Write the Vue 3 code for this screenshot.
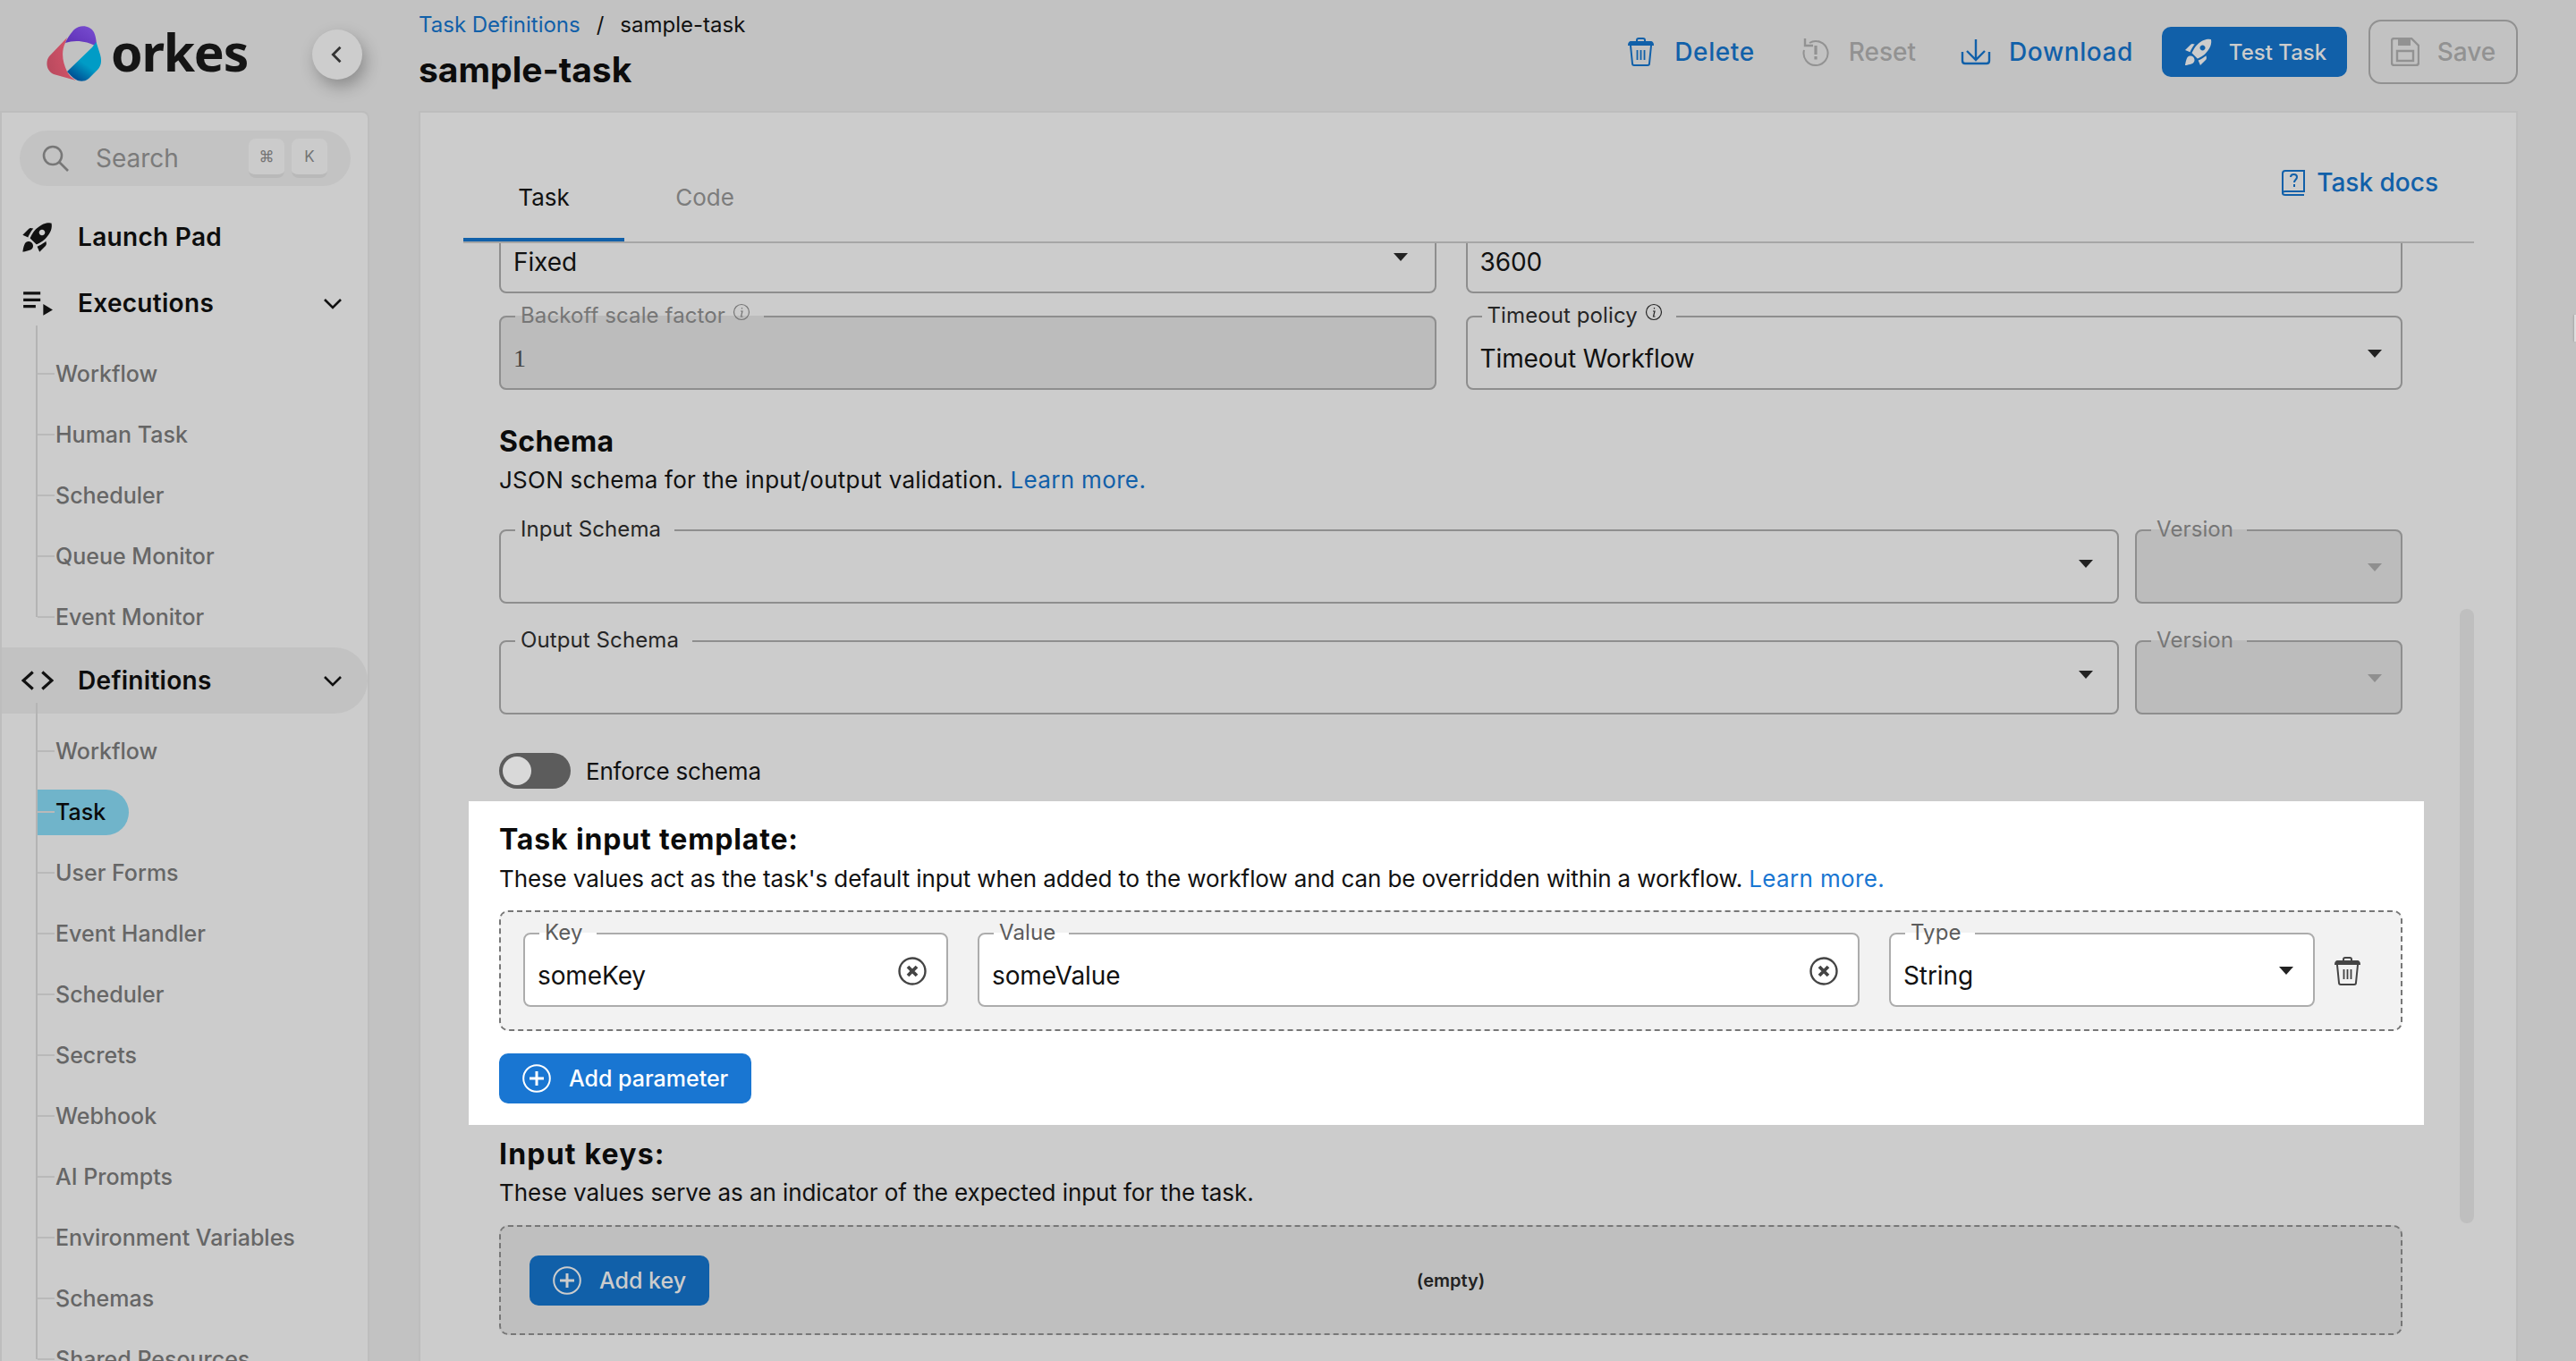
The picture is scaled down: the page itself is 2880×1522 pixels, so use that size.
<template>
  <div class="app">
    <aside class="side">
      <div class="brand">
        <svg class="logo" viewBox="0 0 62 62">
          <defs>
            <linearGradient id="lgBlue" x1="0.7" y1="0.2" x2="0.25" y2="0.95">
              <stop offset="0.45" stop-color="#009cc6" />
              <stop offset="1" stop-color="#004f94" />
            </linearGradient>
            <linearGradient id="lgPurple" x1="0" y1="1" x2="1" y2="0">
              <stop offset="0" stop-color="#5b2cb3" />
              <stop offset="1" stop-color="#7a4fd2" />
            </linearGradient>
            <linearGradient id="lgRed" x1="0" y1="0.7" x2="1" y2="0.3">
              <stop offset="0" stop-color="#b94a5e" />
              <stop offset="1" stop-color="#d9556b" />
            </linearGradient>
          </defs>
          <path fill="url(#lgRed)" d="M23 13L3 34C-1 39-1 50 8 54L33 61C28 58 25 55 23 51C18 41 16 29 21 19Z" />
          <path fill="url(#lgPurple)" d="M21 19C23 14 28 7 31 4C37-2 49-1 53 7C55 11 56 18 56 23C46 17 32 15 21 19Z" />
          <path fill="url(#lgBlue)" d="M55.500 18L60 32C62 39 61 44 58 48L47 59C42 63 36 62 33 60C29 58 26 54 23 51L51 24Z" />
        </svg>
        <span class="logo-text">orkes</span>
        <button class="collapse">
          <svg viewBox="0 0 24 24" width="28" height="28"><path d="M15 5l-7 7 7 7" fill="none" stroke="#333" stroke-width="2.4" /></svg>
        </button>
      </div>

      <nav class="panel">
        <div class="search">
          <svg class="search-ic" viewBox="0 0 30 30"><circle cx="12" cy="12" r="10" fill="none" stroke="#777" stroke-width="2.6" /><path d="M19 19l10 10" stroke="#777" stroke-width="2.6" /></svg>
          <span class="search-txt">Search</span>
          <span class="kbd">⌘</span>
          <span class="kbd">K</span>
        </div>

        <div class="row">
          <svg class="row-ic rocket" viewBox="0 0 24 24"><path d="M9.19 6.35c-2.04 2.29-3.44 5.58-3.57 5.89L2 10.69l4.05-4.05c.47-.47 1.15-.68 1.81-.55l1.33.26zM11.17 17s3.74-1.55 5.89-3.7c5.4-5.4 4.5-9.62 4.21-10.57-.95-.3-5.17-1.19-10.57 4.21C8.55 9.09 7 12.83 7 12.83L11.17 17zm6.48-2.19c-2.29 2.04-5.58 3.44-5.89 3.57L13.31 22l4.05-4.05c.47-.47.68-1.15.55-1.81l-.26-1.33zM9 18c0 .83-.34 1.58-.88 2.12C6.94 21.3 2 22 2 22s.7-4.94 1.88-6.12C4.42 15.34 5.17 15 6 15c1.66 0 3 1.34 3 3zm4-9c0-1.1.9-2 2-2s2 .9 2 2-.9 2-2 2-2-.9-2-2z" /></svg>
          <span>Launch Pad</span>
        </div>

        <div class="row">
          <svg class="row-ic" viewBox="0 0 34 28"><path d="M2 2h18v3H2zM2 9h18v3H2zM2 16h13v3H2zM23 15l10 6-10 6z" /></svg>
          <span>Executions</span>
          <svg class="chev" viewBox="0 0 20 12"><path d="M1 1l9 9 9-9" fill="none" stroke="#111" stroke-width="2.6" /></svg>
        </div>
        <ul class="sub">
          <li v-for="item in executions" :key="item"><span class="sub-txt">{{ item }}</span></li>
        </ul>

        <div class="row row-on">
          <svg class="row-ic" viewBox="0 0 34 24"><path d="M12 3L2 12l10 9M22 3l10 9-10 9" fill="none" stroke="#111" stroke-width="3" /></svg>
          <span>Definitions</span>
          <svg class="chev" viewBox="0 0 20 12"><path d="M1 1l9 9 9-9" fill="none" stroke="#111" stroke-width="2.6" /></svg>
        </div>
        <ul class="sub">
          <li v-for="item in definitions" :key="item"><span class="sub-txt" :class="{ active: item === 'Task' }">{{ item }}</span></li>
        </ul>
      </nav>
    </aside>

    <main class="main">
      <header class="head">
        <div>
          <div class="crumbs"><a>Task Definitions</a><i>/</i><span>sample-task</span></div>
          <h1>sample-task</h1>
        </div>
        <div class="actions">
          <button class="act act-blue">
            <svg viewBox="0 0 31 32" width="31" height="32"><path d="M11 4V3c0-1 1-2 2-2h5c1 0 2 1 2 2v1" fill="none" stroke="#1160a9" stroke-width="2" /><path d="M5 4h21c3 0 4 2 4 5H1c0-3 1-5 4-5z" fill="#1160a9" /><path d="M4 9l2 20c0 1 1 2 2 2h15c1 0 2-1 2-2l2-20" fill="none" stroke="#1160a9" stroke-width="2" /><path d="M11.500 14v11M15.500 14v11M19.500 14v11" fill="none" stroke="#1160a9" stroke-width="1.800" /></svg>
            Delete
          </button>
          <button class="act act-off act-reset">
            <svg viewBox="0 0 30 32" width="30" height="32"><path d="M8 6A13.500 13.500 0 1 1 2 14" fill="none" stroke="#929292" stroke-width="2" /><path d="M3 1v8h9" fill="none" stroke="#929292" stroke-width="2.400" /><path d="M15 9v10M15 21v3.500" stroke="#929292" stroke-width="3.200" /></svg>
            Reset
          </button>
          <button class="act act-blue act-down">
            <svg viewBox="0 0 34 32" width="34" height="32"><path d="M17 2v23M7 15l10 10 10-10" fill="none" stroke="#1160a9" stroke-width="2.400" /><path d="M2 16v10c0 2 1 3 3 3h24c2 0 3-1 3-3V16" fill="none" stroke="#1160a9" stroke-width="2.400" /></svg>
            Download
          </button>
          <button class="btn-test">
            <svg viewBox="0 0 24 24" width="36" height="36"><path fill="#ccc" d="M9.19 6.35c-2.04 2.29-3.44 5.58-3.57 5.89L2 10.69l4.05-4.05c.47-.47 1.15-.68 1.81-.55l1.33.26zM11.17 17s3.74-1.55 5.89-3.7c5.4-5.4 4.5-9.62 4.21-10.57-.95-.3-5.17-1.19-10.57 4.21C8.55 9.09 7 12.83 7 12.83L11.17 17zm6.48-2.19c-2.29 2.04-5.58 3.44-5.89 3.57L13.31 22l4.05-4.05c.47-.47.68-1.15.55-1.81l-.26-1.33zM9 18c0 .83-.34 1.58-.88 2.12C6.94 21.3 2 22 2 22s.7-4.94 1.88-6.12C4.42 15.34 5.17 15 6 15c1.66 0 3 1.34 3 3zm4-9c0-1.1.9-2 2-2s2 .9 2 2-.9 2-2 2-2-.9-2-2z" /></svg>
            Test Task
          </button>
          <button class="btn-save">
            <svg viewBox="0 0 32 32" width="32" height="32"><path d="M4 1h19l8 8v19c0 2-1 3-3 3H4c-2 0-3-1-3-3V4c0-2 1-3 3-3z" fill="none" stroke="#929292" stroke-width="2.400" /><path d="M8 1h14v8H8z" fill="#929292" /><path d="M7 15h18v11H7z" fill="none" stroke="#929292" stroke-width="2.400" /></svg>
            Save
          </button>
        </div>
      </header>

      <section class="card">
        <div class="tabs">
          <div class="tab tab-on">Task</div>
          <div class="tab">Code</div>
          <a class="docs">
            <svg viewBox="0 0 26 29" width="26" height="29"><path d="M4 1h21v23H4C2 24 1 25 1 26V4c0-2 1-3 3-3zM1 26c0 1 1 2 3 2h21" fill="none" stroke="#1160a9" stroke-width="2" /><path d="M10 8c0-4 7-4 7 0 0 3-3 3-3 6M14 16v3" fill="none" stroke="#1160a9" stroke-width="2" /></svg>
            Task docs
          </a>
        </div>

        <div class="scroll">
          <div class="two first">
            <fieldset class="field"><legend></legend><span class="val">Fixed</span><i class="caret c-fixed"></i></fieldset>
            <fieldset class="field"><legend></legend><span class="val">3600</span></fieldset>
          </div>
          <div class="two gap-row">
            <fieldset class="field off">
              <legend>Backoff scale factor<svg class="info" viewBox="0 0 20 20"><circle cx="10" cy="10" r="8.500" fill="none" stroke="currentColor" stroke-width="1.200" /><path d="M10.500 5v1.500M9 9h2l-1.500 6h2" fill="none" stroke="currentColor" stroke-width="1.200" /></svg></legend>
              <span class="val val-num">1</span>
            </fieldset>
            <fieldset class="field">
              <legend>Timeout policy<svg class="info" viewBox="0 0 20 20"><circle cx="10" cy="10" r="8.500" fill="none" stroke="currentColor" stroke-width="1.200" /><path d="M10.500 5v1.500M9 9h2l-1.500 6h2" fill="none" stroke="currentColor" stroke-width="1.200" /></svg></legend>
              <span class="val">Timeout Workflow</span><i class="caret c-side"></i>
            </fieldset>
          </div>

          <h2 class="h-schema">Schema</h2>
          <p class="desc d-schema">JSON schema for the input/output validation. <a>Learn more.</a></p>

          <div class="pick pick-1">
            <fieldset class="field"><legend>Input Schema</legend><span class="val"></span><i class="caret c-empty"></i></fieldset>
            <fieldset class="field off"><legend>Version</legend><span class="val"></span><i class="caret c-off"></i></fieldset>
          </div>
          <div class="pick pick-2">
            <fieldset class="field"><legend>Output Schema</legend><span class="val"></span><i class="caret c-empty"></i></fieldset>
            <fieldset class="field off"><legend>Version</legend><span class="val"></span><i class="caret c-off"></i></fieldset>
          </div>

          <div class="toggle-row">
            <span class="toggle"><span class="thumb"></span></span>
            Enforce schema
          </div>

          <div class="hilite">
            <h2 class="h-task">Task input template:</h2>
            <p class="desc d-task">These values act as the task's default input when added to the workflow and can be overridden within a workflow. <a class="bright">Learn more.</a></p>
            <div class="dash dash-params">
              <fieldset class="field lite"><legend>Key</legend><span class="val">someKey</span>
                <svg class="clear" viewBox="0 0 32 32"><circle cx="16" cy="16" r="14.500" fill="none" stroke="#444" stroke-width="2.400" /><path d="M11 11l10 10M21 11L11 21" stroke="#444" stroke-width="3.800" /></svg>
              </fieldset>
              <fieldset class="field lite"><legend>Value</legend><span class="val">someValue</span>
                <svg class="clear" viewBox="0 0 32 32"><circle cx="16" cy="16" r="14.500" fill="none" stroke="#444" stroke-width="2.400" /><path d="M11 11l10 10M21 11L11 21" stroke="#444" stroke-width="3.800" /></svg>
              </fieldset>
              <fieldset class="field lite"><legend>Type</legend><span class="val">String</span><i class="caret c-type"></i></fieldset>
              <svg class="trash" viewBox="0 0 31 32"><path d="M11 4V3c0-1 1-2 2-2h5c1 0 2 1 2 2v1" fill="none" stroke="#444" stroke-width="2" /><path d="M5 4h21c3 0 4 2 4 5H1c0-3 1-5 4-5z" fill="#444" /><path d="M4 9l2 20c0 1 1 2 2 2h15c1 0 2-1 2-2l2-20" fill="none" stroke="#444" stroke-width="2" /><path d="M11.500 14v11M15.500 14v11M19.500 14v11" fill="none" stroke="#444" stroke-width="1.800" /></svg>
            </div>
            <button class="add add-bright">
              <svg viewBox="0 0 32 32" width="32" height="32"><circle cx="16" cy="16" r="14.800" fill="none" stroke="#fff" stroke-width="2" /><path d="M16 8v16M8 16h16" stroke="#fff" stroke-width="3" /></svg>
              Add parameter
            </button>
          </div>

          <h2 class="h-keys">Input keys:</h2>
          <p class="desc d-keys">These values serve as an indicator of the expected input for the task.</p>
          <div class="dash dash-keys">
            <button class="add">
              <svg viewBox="0 0 32 32" width="32" height="32"><circle cx="16" cy="16" r="14.800" fill="none" stroke="#ccc" stroke-width="2" /><path d="M16 8v16M8 16h16" stroke="#ccc" stroke-width="3" /></svg>
              Add key
            </button>
            <span class="empty">(empty)</span>
          </div>

          <div class="scrollbar"></div>
        </div>
      </section>
    </main>
    <span class="edge-tab"></span>
  </div>
</template>

<script setup>
const executions = ['Workflow', 'Human Task', 'Scheduler', 'Queue Monitor', 'Event Monitor']
const definitions = [
  'Workflow',
  'Task',
  'User Forms',
  'Event Handler',
  'Scheduler',
  'Secrets',
  'Webhook',
  'AI Prompts',
  'Environment Variables',
  'Schemas',
  'Shared Resources'
]
</script>

<style>
html,
body {
  margin: 0;
  height: 100%;
  overflow: hidden;
  background: #c2c2c2;
}
</style>

<style scoped>
* {
  box-sizing: border-box;
}

.app {
  display: flex;
  height: 1522px;
  overflow: hidden;
  font-family: Inter, "Noto Sans", sans-serif;
  color: #111;
  background: #c2c2c2;
}

button {
  font-family: inherit;
  border: none;
  background: none;
  padding: 0;
}

/* sidebar */
.side {
  width: 413px;
  flex: none;
  display: flex;
  flex-direction: column;
}

.brand {
  height: 124px;
  flex: none;
  display: flex;
  align-items: center;
  padding-left: 52px;
}

.logo {
  width: 62px;
  height: 62px;
  margin-bottom: 4px;
  flex: none;
}

.logo-text {
  font-family: "Noto Sans", sans-serif;
  font-size: 57px;
  font-weight: 700;
  letter-spacing: -1.2px;
  color: #151515;
  margin: 0 0 8px 10px;
  line-height: 62px;
}

.collapse {
  position: absolute;
  left: 349px;
  top: 33px;
  width: 56px;
  height: 56px;
  border-radius: 50%;
  background: #cdcdcd;
  box-shadow: 4px 8px 18px rgba(0, 0, 0, 0.28);
  display: flex;
  align-items: center;
  justify-content: center;
}

.panel {
  flex: 1;
  background: #cccccc;
  border: 2px solid #bdbdbd;
  border-bottom: none;
  border-radius: 0 8px 0 0;
  padding-top: 20px;
}

.search {
  height: 62px;
  margin: 0 19px 0 20px;
  border-radius: 31px;
  background: #c3c3c3;
  display: flex;
  align-items: center;
  padding-left: 25px;
  gap: 0;
}

.search-ic {
  width: 30px;
  height: 30px;
  flex: none;
}

.search-txt {
  flex: 1;
  margin-left: 30px;
  font-size: 28px;
  color: #7b7b7b;
}

.kbd {
  width: 40px;
  height: 44px;
  margin-right: 8px;
  border-radius: 8px;
  background: #cbcbcb;
  border-bottom: 4px solid #b9b9b9;
  font-size: 17px;
  color: #747474;
  display: flex;
  align-items: center;
  justify-content: center;
}

.kbd:last-child {
  margin-right: 26px;
}

.row {
  height: 74px;
  display: flex;
  align-items: center;
  padding-left: 22px;
  font-size: 28px;
  font-weight: 600;
  letter-spacing: 0.3px;
  color: #0d0d0d;
  position: relative;
}

.search + .row {
  margin-top: 20px;
}

.row > span {
  position: absolute;
  left: 85px;
}

.row-ic {
  width: 36px;
  height: 36px;
  flex: none;
  fill: #111;
}

.row-ic.rocket {
  width: 40px;
  height: 40px;
  margin-left: -2px;
}

.chev {
  width: 20px;
  height: 12px;
  position: absolute;
  right: 29px;
  top: 32px;
}

.row-on {
  background: #c2c2c2;
  border-radius: 0 37px 37px 0;
}

.sub {
  list-style: none;
  margin: 8px 0 0 40px;
  padding: 0;
  position: relative;
  border: none;
}

.sub::before {
  content: "";
  position: absolute;
  left: -2px;
  top: -20px;
  bottom: 34px;
  width: 2px;
  background: #b4b4b4;
}

.sub li {
  height: 68px;
  display: flex;
  align-items: center;
  position: relative;
}

.sub li::before {
  content: "";
  position: absolute;
  left: 0;
  top: 33px;
  width: 19px;
  height: 2px;
  background: #b9b9b9;
  z-index: 1;
}

.sub-txt {
  padding-left: 20px;
  font-size: 25px;
  font-weight: 500;
  color: #666;
}

.sub-txt.active {
  height: 51px;
  display: flex;
  align-items: center;
  padding-right: 26px;
  border-radius: 0 26px 26px 0;
  background: #70b4ca;
  color: #0a0a0a;
  position: relative;
  z-index: 0;
}

/* main */
.main {
  flex: 1;
  min-width: 0;
  margin: 0 65px 0 55px;
  display: flex;
  flex-direction: column;
}

.head {
  height: 124px;
  flex: none;
  display: flex;
  justify-content: space-between;
  align-items: flex-start;
}

.crumbs {
  margin-top: 12px;
  line-height: 32px;
  font-size: 24px;
  display: flex;
}

.crumbs a {
  color: #1160a9;
}

.crumbs i {
  font-style: normal;
  margin: 0 18px;
}

h1 {
  margin: 8px 0 0;
  font-size: 39px;
  line-height: 52px;
  font-weight: 700;
  color: #0c0c0c;
}

.actions {
  height: 116px;
  display: flex;
  align-items: center;
}

.act {
  display: flex;
  align-items: center;
  gap: 22px;
  font-size: 28px;
  font-weight: 500;
  letter-spacing: 0.6px;
}

.act-blue {
  color: #1160a9;
}

.act-off {
  color: #929292;
  letter-spacing: 0;
}

.act-reset {
  margin-left: 53px;
}

.act-down {
  gap: 20px;
  margin-left: 50px;
  margin-right: 32px;
}

.btn-test {
  width: 207px;
  height: 56px;
  border-radius: 10px;
  background: #1160a9;
  color: #ccc;
  font-size: 24px;
  font-weight: 500;
  display: flex;
  align-items: center;
  justify-content: center;
  gap: 16px;
}

.btn-save {
  width: 167px;
  height: 72px;
  margin-left: 24px;
  border: 2px solid #919191;
  border-radius: 14px;
  color: #929292;
  font-size: 28px;
  font-weight: 500;
  display: flex;
  align-items: center;
  justify-content: center;
  gap: 20px;
}

.card {
  flex: 1;
  min-height: 0;
  background: #cccccc;
  border: 2px solid #bdbdbd;
  border-bottom: none;
  padding: 0 47px 0 48px;
  display: flex;
  flex-direction: column;
}

.tabs {
  height: 146px;
  flex: none;
  display: flex;
  align-items: flex-end;
  border-bottom: 2px solid #a6a6a6;
  position: relative;
}

.tab {
  width: 180px;
  height: 96px;
  display: flex;
  align-items: center;
  justify-content: center;
  font-size: 26px;
  font-weight: 400;
  color: #7c7c7c;
  border-bottom: 4px solid transparent;
}

.tab-on {
  color: #111;
  border-bottom-color: #1160a9;
}

.docs {
  margin: 0 40px auto auto;
  padding-top: 61px;
  display: flex;
  align-items: center;
  gap: 13px;
  font-size: 28px;
  font-weight: 500;
  color: #1160a9;
}

.scroll {
  flex: 1;
  min-height: 0;
  overflow: hidden;
  padding: 0 80px 0 40px;
  position: relative;
}

.two {
  display: grid;
  grid-template-columns: 1fr 1fr;
  gap: 33px;
}

.two.first {
  margin-top: -41px;
}

.two.gap-row {
  margin-top: 11px;
}

.field {
  margin: 0;
  padding: 0 0 0 14px;
  min-width: 0;
  height: 97px;
  border: 2px solid #8e8e8e;
  border-radius: 8px;
  display: flex;
  align-items: center;
  background: #cccccc;
}

.field legend {
  height: 30px;
  line-height: 28px;
  margin-left: 2px;
  padding: 0 15px 0 6px;
  font-size: 24px;
  letter-spacing: 0.1px;
  color: #262626;
  display: flex;
}

.field legend:empty {
  padding: 0;
}

.field.off {
  background: #bcbcbc;
}

.field.off legend {
  color: #767676;
}

.field.lite {
  background: #fff;
  border-color: #acacac;
}

.field.lite legend {
  color: #5c5c5c;
}

.val {
  flex: 1;
  font-size: 28px;
  font-weight: 400;
  letter-spacing: -0.1px;
  color: #111;
  margin-bottom: 1px;
}

.val-num {
  font-family: "Liberation Serif", serif;
  color: #444;
}

.info {
  width: 20px;
  height: 20px;
  margin: 0 0 0 8px;
}

.caret {
  width: 0;
  height: 0;
  flex: none;
  border-left: 8px solid transparent;
  border-right: 8px solid transparent;
  border-top: 9px solid #222;
  margin-bottom: 12px;
}

.c-fixed {
  margin-right: 30px;
}

.c-side {
  margin-right: 21px;
}

.c-empty {
  margin-right: 27px;
  margin-bottom: 20px;
}

.c-off {
  margin-right: 21px;
  margin-bottom: 12px;
  border-top-color: #8f8f8f;
}

.c-type {
  margin-right: 22px;
}

h2 {
  margin: 0;
  font-size: 32px;
  line-height: 40px;
  font-weight: 700;
  color: #0b0b0b;
}

.h-schema {
  margin-top: 38px;
  letter-spacing: 0.3px;
}

.h-task {
  letter-spacing: 0.85px;
}

.h-keys {
  margin-top: 13px;
  letter-spacing: 1.2px;
}

.desc {
  margin: 6px 0 0;
  font-size: 26px;
  line-height: 34px;
  color: #111;
}

.d-schema {
  letter-spacing: 0.25px;
}

.d-task {
  letter-spacing: -0.11px;
}

.d-keys {
  letter-spacing: -0.08px;
}

.desc a {
  color: #1160a9;
  letter-spacing: 0.35px;
}

.desc a.bright {
  color: #1976d2;
}

.pick {
  display: grid;
  grid-template-columns: 1fr 299px;
  gap: 18px;
}

.pick-1 {
  margin-top: 24px;
}

.pick-2 {
  margin-top: 27px;
}

.toggle-row {
  margin-top: 43px;
  height: 40px;
  display: flex;
  align-items: center;
  gap: 17px;
  font-size: 26px;
  letter-spacing: -0.2px;
  color: #111;
}

.toggle {
  width: 80px;
  height: 40px;
  border-radius: 20px;
  background: #5c5c5c;
  padding: 0 4px;
  display: flex;
  align-items: center;
}

.thumb {
  width: 32px;
  height: 32px;
  border-radius: 50%;
  background: #d9d9d9;
}

.hilite {
  margin: 14px -24px 0 -34px;
  padding: 23px 24px 24px 34px;
  background: #fff;
}

.hilite .desc {
  margin-top: 7px;
}

.dash {
  border: 2px dashed #777;
  border-radius: 10px;
}

.dash-params {
  margin-top: 18px;
  height: 135px;
  padding: 9px 0 0 25px;
  background: #f2f2f2;
  display: grid;
  grid-template-columns: 475px 986px 476px 1fr;
  column-gap: 33px;
}

.clear {
  width: 32px;
  height: 32px;
  flex: none;
  margin: 0 22px 12px 0;
}

.trash {
  width: 31px;
  height: 32px;
  margin: 41px 0 0 -12px;
}

.add {
  height: 56px;
  border-radius: 10px;
  background: #1160a9;
  color: #ccc;
  font-size: 25px;
  font-weight: 500;
  display: flex;
  align-items: center;
  gap: 20px;
  padding: 0 26px;
}

.add-bright {
  margin-top: 25px;
  background: #1976d2;
  color: #fff;
}

.dash-keys {
  margin-top: 19px;
  height: 123px;
  background: #bfbfbf;
  display: grid;
  grid-template-columns: 1fr auto 1fr;
  align-items: center;
  padding: 0 32px;
}

.dash-keys .add {
  justify-self: start;
}

.empty {
  font-size: 20px;
  font-weight: 600;
  color: #222;
}

.scrollbar {
  position: absolute;
  right: 0;
  top: 409px;
  width: 16px;
  height: 687px;
  border-radius: 8px;
  background: #bfbfbf;
}

.edge-tab {
  position: absolute;
  right: 0;
  top: 352px;
  width: 2px;
  height: 30px;
  background: #dedede;
  box-shadow: -1px 0 2px rgba(0, 0, 0, 0.15);
}
</style>
